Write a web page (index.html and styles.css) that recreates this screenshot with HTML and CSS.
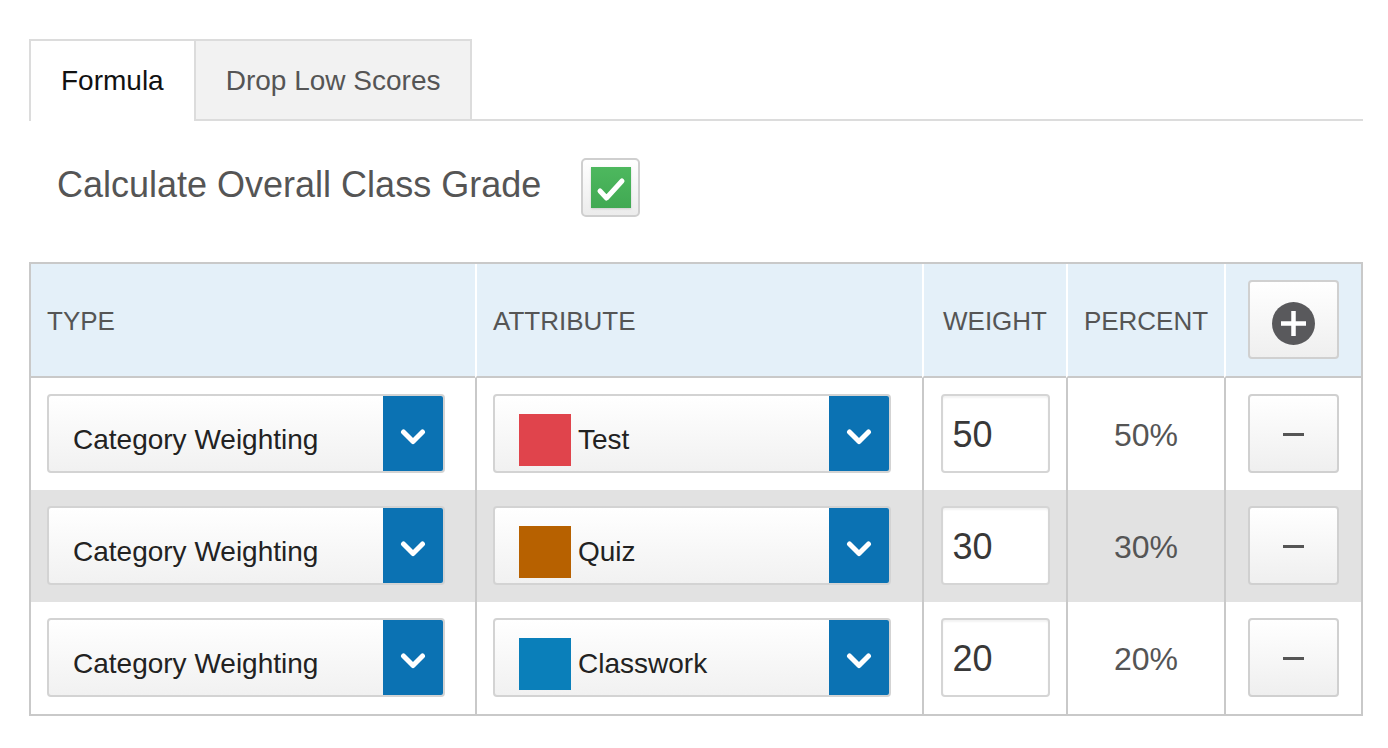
FILE: index.html
```html
<!DOCTYPE html>
<html lang="en">
<head>
<meta charset="utf-8">
<title>Formula</title>
<link rel="stylesheet" href="styles.css">
</head>
<body>
<div class="page">
  <div class="tabs">
    <div class="tab active">Formula</div>
    <div class="tab">Drop Low Scores</div>
  </div>

  <div class="calc">
    <span class="calc-label">Calculate Overall Class Grade</span>
    <span class="checkbox">
      <span class="check">
        <svg width="40" height="41" viewBox="0 0 40 41"><path d="M9 24 L15.5 31 L31 14" fill="none" stroke="#fff" stroke-width="5" stroke-linecap="round" stroke-linejoin="round"/></svg>
      </span>
    </span>
  </div>

  <table class="grid">
    <colgroup>
      <col class="c-type"><col class="c-attr"><col class="c-weight"><col class="c-percent"><col class="c-action">
    </colgroup>
    <thead>
      <tr>
        <th class="h-left"><span class="h-text">TYPE</span></th>
        <th class="h-left"><span class="h-text">ATTRIBUTE</span></th>
        <th class="h-center"><span class="h-text">WEIGHT</span></th>
        <th class="h-center"><span class="h-text">PERCENT</span></th>
        <th class="h-center">
          <span class="btn">
            <svg class="plus" width="43" height="43" viewBox="0 0 43 43"><circle cx="21.5" cy="21.5" r="21.5" fill="#59595c"/><path d="M21.5 9 V34 M9 21.5 H34" stroke="#fff" stroke-width="4.5"/></svg>
          </span>
        </th>
      </tr>
    </thead>
    <tbody>
      <tr>
        <td class="d-left">
          <div class="select"><span class="select-value">Category Weighting</span><span class="select-arrow"><svg width="26" height="16" viewBox="0 0 26 16"><polyline points="3.5,3 13,12.5 22.5,3" fill="none" stroke="#fff" stroke-width="5" stroke-linecap="round" stroke-linejoin="round"/></svg></span></div>
        </td>
        <td class="d-left">
          <div class="select"><span class="select-value"><span class="swatch swatch-red"></span>Test</span><span class="select-arrow"><svg width="26" height="16" viewBox="0 0 26 16"><polyline points="3.5,3 13,12.5 22.5,3" fill="none" stroke="#fff" stroke-width="5" stroke-linecap="round" stroke-linejoin="round"/></svg></span></div>
        </td>
        <td class="d-center"><input class="weight" type="text" value="50"></td>
        <td class="d-center percent">50%</td>
        <td class="d-center"><span class="btn"><span class="minus"></span></span></td>
      </tr>
      <tr class="alt">
        <td class="d-left">
          <div class="select"><span class="select-value">Category Weighting</span><span class="select-arrow"><svg width="26" height="16" viewBox="0 0 26 16"><polyline points="3.5,3 13,12.5 22.5,3" fill="none" stroke="#fff" stroke-width="5" stroke-linecap="round" stroke-linejoin="round"/></svg></span></div>
        </td>
        <td class="d-left">
          <div class="select"><span class="select-value"><span class="swatch swatch-brown"></span>Quiz</span><span class="select-arrow"><svg width="26" height="16" viewBox="0 0 26 16"><polyline points="3.5,3 13,12.5 22.5,3" fill="none" stroke="#fff" stroke-width="5" stroke-linecap="round" stroke-linejoin="round"/></svg></span></div>
        </td>
        <td class="d-center"><input class="weight" type="text" value="30"></td>
        <td class="d-center percent">30%</td>
        <td class="d-center"><span class="btn"><span class="minus"></span></span></td>
      </tr>
      <tr>
        <td class="d-left">
          <div class="select"><span class="select-value">Category Weighting</span><span class="select-arrow"><svg width="26" height="16" viewBox="0 0 26 16"><polyline points="3.5,3 13,12.5 22.5,3" fill="none" stroke="#fff" stroke-width="5" stroke-linecap="round" stroke-linejoin="round"/></svg></span></div>
        </td>
        <td class="d-left">
          <div class="select"><span class="select-value"><span class="swatch swatch-blue"></span>Classwork</span><span class="select-arrow"><svg width="26" height="16" viewBox="0 0 26 16"><polyline points="3.5,3 13,12.5 22.5,3" fill="none" stroke="#fff" stroke-width="5" stroke-linecap="round" stroke-linejoin="round"/></svg></span></div>
        </td>
        <td class="d-center"><input class="weight" type="text" value="20"></td>
        <td class="d-center percent">20%</td>
        <td class="d-center"><span class="btn"><span class="minus"></span></span></td>
      </tr>
    </tbody>
  </table>
</div>
</body>
</html>
```

FILE: styles.css
```css
* { box-sizing: border-box; }

body {
  margin: 0;
  background: #fff;
  font-family: "Liberation Sans", Arial, Helvetica, sans-serif;
}

.page {
  width: 1334px;
  margin-left: 29px;
  padding-top: 39px;
}

/* Tabs */
.tabs {
  display: flex;
  align-items: flex-start;
  height: 82px;
  border-bottom: 2px solid #dcdcdc;
}

.tab {
  height: 80px;
  line-height: 80px;
  padding: 0 30px;
  font-size: 28px;
  color: #555;
  background: #f2f2f2;
  border-top: 2px solid #dcdcdc;
  border-right: 2px solid #dcdcdc;
}

.tab.active {
  height: 82px;
  margin-bottom: -2px;
  background: #fff;
  color: #111;
  border-left: 2px solid #dcdcdc;
}

/* Calculate row */
.calc {
  display: flex;
  align-items: center;
  margin-top: 37px;
  padding-left: 28px;
  height: 59px;
}

.calc-label {
  font-size: 36px;
  color: #555;
  margin-right: 40px;
  margin-top: -5px;
}

.checkbox {
  width: 59px;
  height: 59px;
  border: 2px solid #cfcfcf;
  border-radius: 5px;
  background: linear-gradient(#ffffff, #ececec);
  display: flex;
  align-items: center;
  justify-content: center;
}

.check {
  width: 40px;
  height: 41px;
  display: block;
  background: linear-gradient(#4db85e, #41a953);
  box-shadow: 0 1px 2px rgba(0,0,0,0.15);
}

.check svg { display: block; }

/* Table */
.grid {
  margin-top: 45px;
  width: 1334px;
  table-layout: fixed;
  border-collapse: separate;
  border-spacing: 0;
  border: 2px solid #c9c9c9;
}

.c-type { width: 444px; }
.c-attr { width: 447px; }
.c-weight { width: 144px; }
.c-percent { width: 158px; }
.c-action { width: 137px; }

th, td {
  padding: 16px 0 17px 0;
  vertical-align: middle;
}

th {
  background: #e4f0f9;
  font-size: 26px;
  font-weight: normal;
  color: #555;
  border-bottom: 2px solid #c9c9c9;
  border-left: 2px solid #fff;
}

.h-text {
  display: inline-block;
  padding-top: 4px;
}

th:first-child { border-left: none; }

td { border-left: 2px solid #c9c9c9; }
td:first-child { border-left: none; }

.h-left { text-align: left; padding-left: 16px; }
.h-center { text-align: center; }
.d-left { padding-left: 16px; }
.d-center { text-align: center; }

tr.alt td { background: #e2e2e2; }

/* Select */
.select {
  display: flex;
  width: 398px;
  height: 79px;
  border: 2px solid #d3d3d3;
  border-radius: 4px;
  background: linear-gradient(#ffffff, #f1f1f1);
  overflow: hidden;
}

.select-value {
  flex: 1;
  display: flex;
  align-items: center;
  padding: 13px 0 0 24px;
  font-size: 28px;
  color: #222;
}

.select-arrow {
  width: 60px;
  background: #0b72b3;
  display: flex;
  align-items: center;
  justify-content: center;
  padding-top: 6px;
}

.select-arrow svg { display: block; }

.swatch {
  width: 52px;
  height: 52px;
  margin-right: 7px;
  flex: none;
}

.swatch-red { background: #e0444c; }
.swatch-brown { background: #b76100; }
.swatch-blue { background: #0a7fba; }

/* Weight input */
.weight {
  display: block;
  margin: 0 auto;
  width: 109px;
  height: 79px;
  border: 2px solid #d5d5d5;
  border-radius: 4px;
  background: #fff;
  box-shadow: inset 0 2px 2px rgba(0,0,0,0.05);
  padding: 3px 0 0 10px;
  font-family: inherit;
  font-size: 36px;
  color: #383838;
  outline: none;
}

.percent {
  font-size: 32px;
  color: #555;
  padding-top: 20px;
}

/* Buttons */
.btn {
  width: 91px;
  height: 79px;
  margin: 0 auto;
  border: 2px solid #d0d0d0;
  border-radius: 4px;
  background: linear-gradient(#ffffff, #efefef);
  display: flex;
  align-items: center;
  justify-content: center;
}

.btn svg { display: block; }

.plus { margin-top: 8px; }

.minus {
  display: block;
  width: 21px;
  height: 3px;
  background: #555;
  margin-top: 2px;
}
```
